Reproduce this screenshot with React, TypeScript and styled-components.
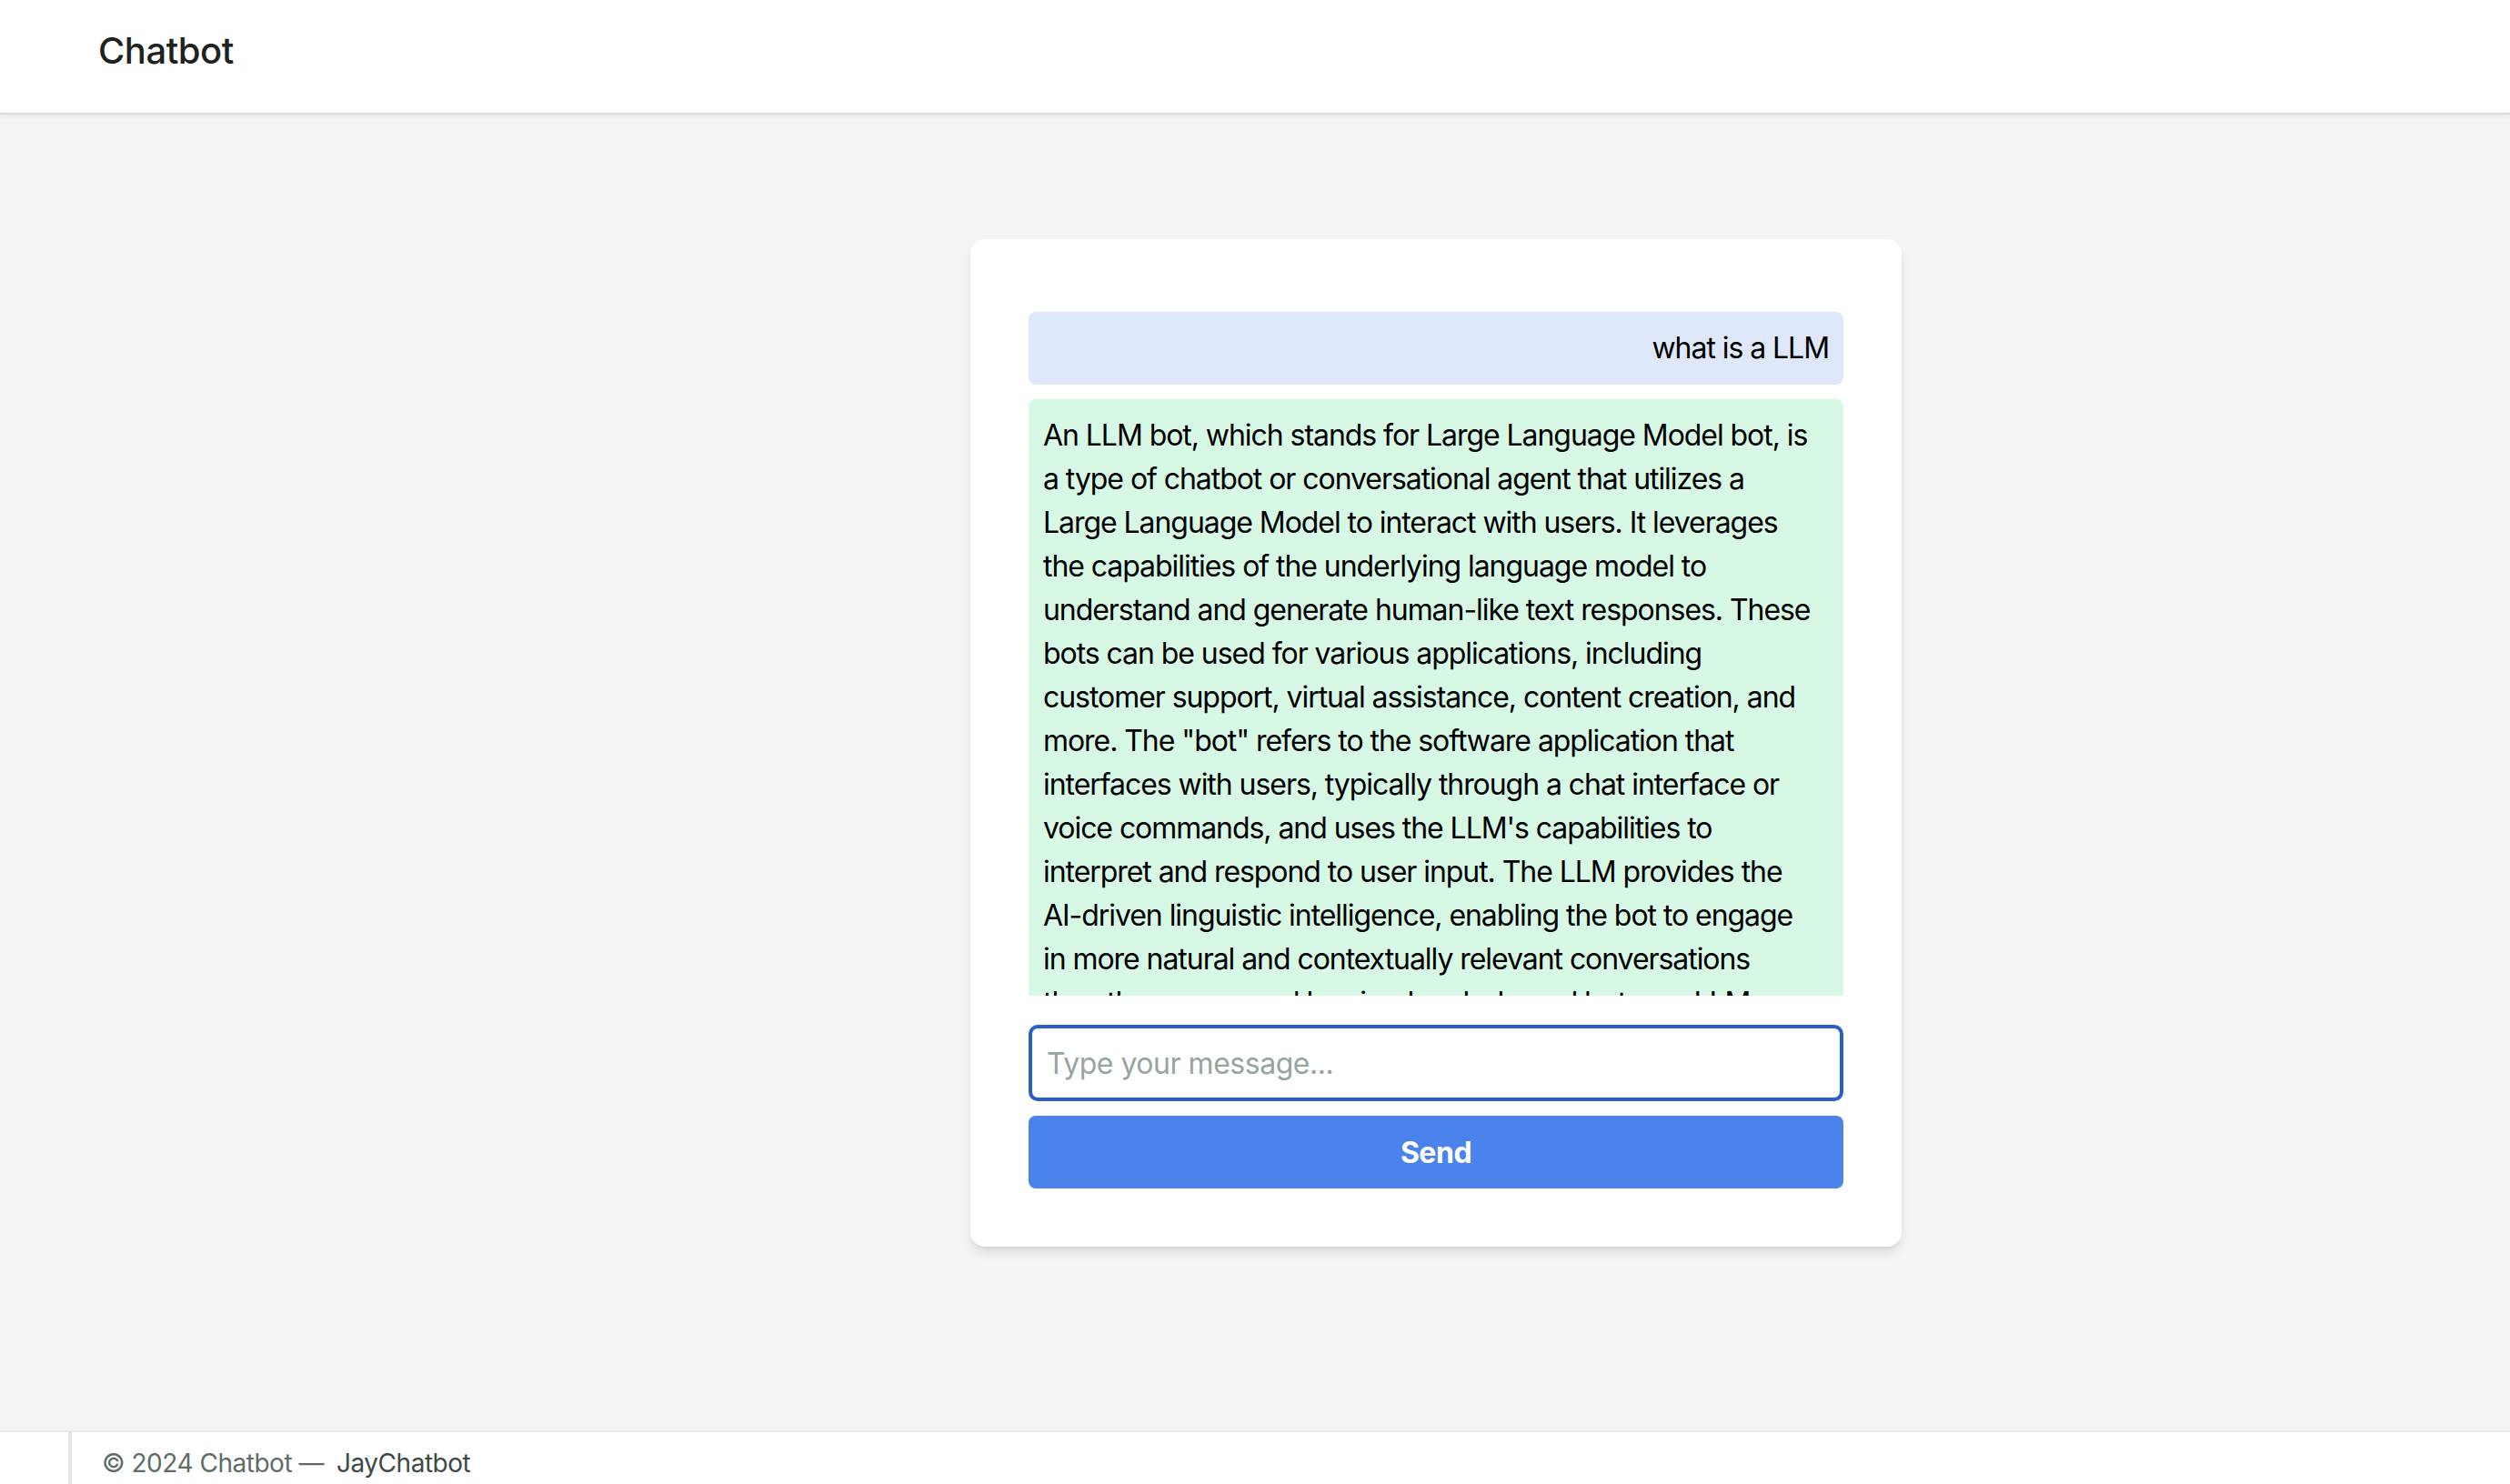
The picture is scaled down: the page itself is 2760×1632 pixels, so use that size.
import React, { useState } from 'react';
import styled, { createGlobalStyle } from 'styled-components';

const GlobalStyle = createGlobalStyle`
    * {
        box-sizing: border-box;
    }

    body {
        margin: 0;
        background: #f3f4f6;
        font-family: Inter, "Noto Sans", sans-serif;
        letter-spacing: -0.03em;
        color: #000;
    }
`;

interface Message {
    id: number;
    from: 'user' | 'bot';
    lines: string[];
}

// lines are kept as they wrap in the chat window
const messages: Message[] = [
    { id: 1, from: 'user', lines: ['what is a LLM'] },
    {
        id: 2,
        from: 'bot',
        lines: [
            'An LLM bot, which stands for Large Language Model bot, is',
            'a type of chatbot or conversational agent that utilizes a',
            'Large Language Model to interact with users. It leverages',
            'the capabilities of the underlying language model to',
            'understand and generate human-like text responses. These',
            'bots can be used for various applications, including',
            'customer support, virtual assistance, content creation, and',
            'more. The "bot" refers to the software application that',
            'interfaces with users, typically through a chat interface or',
            'voice commands, and uses the LLM\'s capabilities to',
            'interpret and respond to user input. The LLM provides the',
            'AI-driven linguistic intelligence, enabling the bot to engage',
            'in more natural and contextually relevant conversations',
            'than those powered by simple rule-based bots, an LLM',
            'bot feels closer to talking with a person.',
        ],
    },
];

const Page = styled.div`
    display: flex;
    flex-direction: column;
    min-height: 100vh;
`;

const Header = styled.header`
    height: 126px;
    padding: 28px 108px 0;
    background: #fff;
    border-bottom: 2px solid #dadadd;
    box-shadow: 0 2px 3px rgba(0, 0, 0, 0.04);
`;

const Brand = styled.h1`
    margin: 0;
    font-size: 40px;
    line-height: 56px;
    font-weight: 500;
    color: #1e2320;
`;

const Main = styled.main`
    flex: 1;
    display: grid;
    grid-template-columns: 398px 1fr;
    padding-top: 137px;
`;

const Spacer = styled.aside``;

const CardColumn = styled.div`
    display: flex;
    justify-content: center;
    align-items: flex-start;
`;

const Card = styled.section`
    width: 1024px;
    padding: 64px;
    background: #fff;
    border-radius: 16px;
    box-shadow: 0 8px 12px -2px rgba(0, 0, 0, 0.1), 0 4px 6px -4px rgba(0, 0, 0, 0.1);
`;

const MessageList = styled.div`
    height: 768px;
    overflow: hidden;
    margin-bottom: 32px;
`;

const Bubble = styled.div<{ $from: 'user' | 'bot' }>`
    margin: 16px 0;
    padding: 16px;
    border-radius: 8px;
    font-size: 32px;
    line-height: 48px;
    letter-spacing: -0.033em;
    text-align: ${({ $from }) => ($from === 'user' ? 'right' : 'left')};
    background: ${({ $from }) => ($from === 'user' ? '#dee8fa' : '#d8f8e6')};
`;

const Line = styled.span`
    display: block;
    white-space: nowrap;
`;

const Input = styled.input`
    display: block;
    width: 100%;
    height: 84px;
    padding: 0 16px;
    border: 4px solid #2a5fcb;
    border-radius: 10px;
    font-family: inherit;
    letter-spacing: inherit;
    font-size: 32px;
    color: #000;
    outline: none;

    &::placeholder {
        color: #97a59f;
    }
`;

const SendButton = styled.button`
    display: block;
    width: 100%;
    height: 80px;
    margin-top: 16px;
    border: none;
    border-radius: 8px;
    background: #4b83ed;
    color: #fff;
    font-family: inherit;
    letter-spacing: inherit;
    font-size: 32px;
    font-weight: 700;
    cursor: pointer;
`;

const Footer = styled.footer`
    height: 59px;
    background: #fff;
    border-top: 2px solid #ececef;
    overflow: hidden;
`;

const FooterInner = styled.div`
    height: 100%;
    margin-left: 75px;
    padding: 14px 0 0 33px;
    border-left: 4px solid #e6e6e8;
    font-size: 28px;
    line-height: 40px;
    color: #5e6d66;
`;

const FooterLink = styled.a`
    margin-left: 14px;
    color: #3d4a44;
    text-decoration: none;
`;

const App: React.FC = () => {
    const [draft, setDraft] = useState('');

    return (
        <Page>
            <GlobalStyle />
            <Header>
                <Brand>Chatbot</Brand>
            </Header>
            <Main>
                <Spacer />
                <CardColumn>
                    <Card>
                        <MessageList>
                            {messages.map(msg => (
                                <Bubble key={msg.id} $from={msg.from}>
                                    {msg.lines.map(line => (
                                        <Line key={line}>{line}</Line>
                                    ))}
                                </Bubble>
                            ))}
                        </MessageList>
                        <Input
                            type="text"
                            placeholder="Type your message..."
                            value={draft}
                            onChange={e => setDraft(e.target.value)}
                            autoFocus
                        />
                        <SendButton type="button">Send</SendButton>
                    </Card>
                </CardColumn>
            </Main>
            <Footer>
                <FooterInner>
                    &copy; 2024 Chatbot &mdash;
                    <FooterLink href="#">JayChatbot</FooterLink>
                </FooterInner>
            </Footer>
        </Page>
    );
};

export default App;
